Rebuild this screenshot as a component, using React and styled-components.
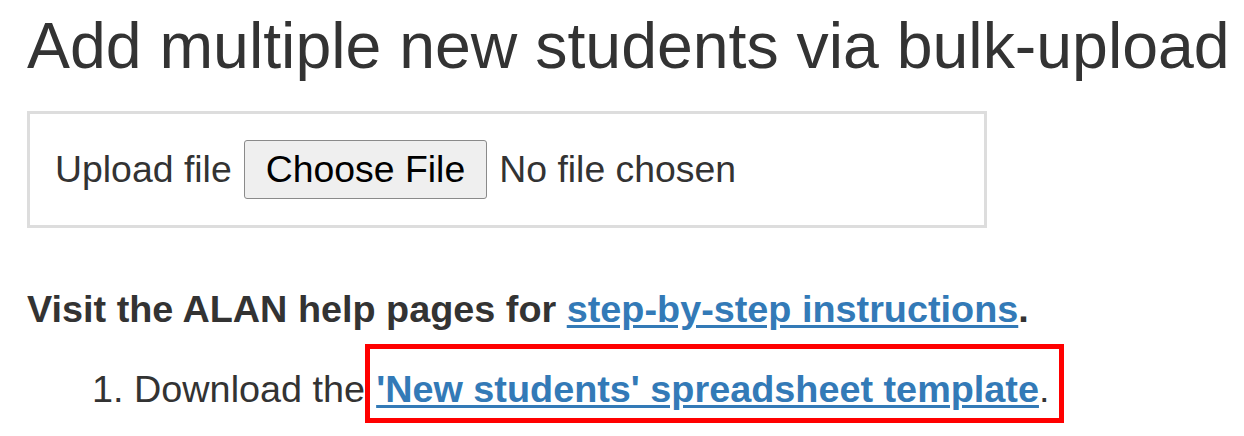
import React from 'react';
import styled, { createGlobalStyle } from 'styled-components';

const GlobalStyle = createGlobalStyle`
  body {
    margin: 0;
    background: #fff;
    color: #333;
    font-family: 'Liberation Sans', Arial, sans-serif;
  }
`;

const Page = styled.div`
  box-sizing: border-box;
  min-height: 100vh;
  padding: 0 27px;
`;

const Title = styled.h2`
  margin: 11px 0 29px;
  font-size: 64.4px;
  font-weight: 400;
  line-height: 1.1;
  white-space: nowrap;
`;

const UploadPanel = styled.div`
  box-sizing: border-box;
  width: 960px;
  border: 3px solid #ddd;
  padding: 26px 25px;
  display: flex;
  align-items: center;
  gap: 12px;
  font-size: 37.4px;
`;

const FileButton = styled.span`
  box-sizing: border-box;
  height: 59px;
  padding: 0 21px;
  display: inline-flex;
  align-items: center;
  background: #efefef;
  border: 1px solid #8a8a8a;
  border-radius: 3px;
  color: #000;
`;

const Help = styled.p`
  margin: 55px 0 0;
  font-size: 37.8px;
  font-weight: 700;
  line-height: 1.4;
`;

const Steps = styled.ol`
  margin: 27px 0 0;
  padding-left: 107px;
  font-size: 37.8px;
  line-height: 1.4;
`;

const HelpLink = styled.a`
  color: #337ab7;
  font-weight: 700;
  text-decoration: underline;
  text-underline-offset: 3px;
`;

const Highlight = styled.span`
  border: 5px solid #f00;
  padding: 19px 10px 8px 6px;
`;

export default function App() {
  return (
    <Page>
      <GlobalStyle />
      <Title>Add multiple new students via bulk-upload</Title>
      <UploadPanel>
        <span>Upload file</span>
        <FileButton>Choose File</FileButton>
        <span>No file chosen</span>
      </UploadPanel>
      <Help>
        Visit the ALAN help pages for <HelpLink href="#">step-by-step instructions</HelpLink>.
      </Help>
      <Steps>
        <li>
          Download the
          <Highlight>
            <HelpLink href="#">'New students' spreadsheet template</HelpLink>.
          </Highlight>
        </li>
      </Steps>
    </Page>
  );
}
